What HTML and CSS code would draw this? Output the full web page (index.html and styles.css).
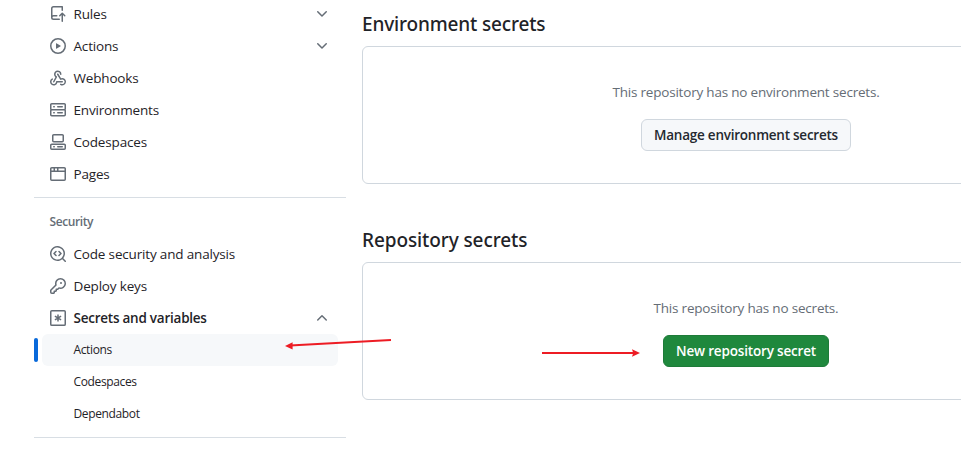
FILE: index.html
```html
<!DOCTYPE html>
<html lang="en">
<head>
<meta charset="utf-8">
<title>Actions secrets</title>
<link rel="stylesheet" href="styles.css">
</head>
<body>
<div class="page">
  <nav class="sidebar">
    <ul class="nav-list">
      <li class="nav-item"><svg class="icon" viewBox="0 0 16 16"><path d="M1 2.5A2.5 2.5 0 0 1 3.5 0h8.75a.75.75 0 0 1 .75.75v3.5a.75.75 0 0 1-1.5 0V1.5h-8a1 1 0 0 0-1 1v6.708A2.493 2.493 0 0 1 3.5 9h3.25a.75.75 0 0 1 0 1.5H3.5a1 1 0 0 0 0 2h5.75a.75.75 0 0 1 0 1.5H3.5A2.5 2.5 0 0 1 1 11.5Zm13.23 7.79h-.001l-1.224-1.224v6.184a.75.75 0 0 1-1.5 0V9.066L10.28 10.29a.75.75 0 0 1-1.06-1.061l2.505-2.504a.75.75 0 0 1 1.06 0L15.29 9.23a.751.751 0 0 1-.018 1.042.751.751 0 0 1-1.042.018Z"/></svg><span class="label">Rules</span><svg class="icon chevron" viewBox="0 0 16 16"><path d="M12.78 5.22a.749.749 0 0 1 0 1.06l-4.25 4.25a.749.749 0 0 1-1.06 0L3.22 6.28a.749.749 0 1 1 1.06-1.06L8 8.939l3.72-3.719a.749.749 0 0 1 1.06 0Z"/></svg></li>
      <li class="nav-item"><svg class="icon" viewBox="0 0 16 16"><path d="M8 0a8 8 0 1 1 0 16A8 8 0 0 1 8 0ZM1.5 8a6.5 6.5 0 1 0 13 0 6.5 6.5 0 0 0-13 0Zm4.879-2.773 4.264 2.559a.25.25 0 0 1 0 .428l-4.264 2.559A.25.25 0 0 1 6 10.559V5.442a.25.25 0 0 1 .379-.215Z"/></svg><span class="label">Actions</span><svg class="icon chevron" viewBox="0 0 16 16"><path d="M12.78 5.22a.749.749 0 0 1 0 1.06l-4.25 4.25a.749.749 0 0 1-1.06 0L3.22 6.28a.749.749 0 1 1 1.06-1.06L8 8.939l3.72-3.719a.749.749 0 0 1 1.06 0Z"/></svg></li>
      <li class="nav-item"><svg class="icon" viewBox="0 0 16 16"><path d="M5.5 4.25a2.25 2.25 0 0 1 4.5 0 .75.75 0 0 0 1.5 0 3.75 3.75 0 1 0-6.14 2.889l-2.272 4.258a.75.75 0 0 0 1.324.706L7 7.25a.75.75 0 0 0-.309-1.015A2.25 2.25 0 0 1 5.5 4.25Z"/><path d="M7.364 3.607a.75.75 0 0 1 1.03.257l2.608 4.349a3.75 3.75 0 1 1-.628 6.785.75.75 0 0 1 .752-1.299 2.25 2.25 0 1 0-.033-3.88.75.75 0 0 1-1.03-.256L7.107 4.636a.75.75 0 0 1 .257-1.03Z"/><path d="M2.9 8.776A.75.75 0 0 1 2.625 9.8 2.25 2.25 0 1 0 6 11.75a.75.75 0 0 1 .75-.751h5.5a.75.75 0 0 1 0 1.5H7.425a3.751 3.751 0 1 1-5.55-3.998.75.75 0 0 1 1.024.274Z"/></svg><span class="label">Webhooks</span></li>
      <li class="nav-item"><svg class="icon" viewBox="0 0 16 16"><path d="M1.75 1h12.5c.966 0 1.75.784 1.75 1.75v4c0 .372-.116.717-.314 1 .198.283.314.628.314 1v4a1.75 1.75 0 0 1-1.75 1.75H1.75A1.75 1.75 0 0 1 0 12.75v-4c0-.358.109-.707.314-1a1.739 1.739 0 0 1-.314-1v-4C0 1.784.784 1 1.75 1ZM1.5 2.75v4c0 .138.112.25.25.25h12.5a.25.25 0 0 0 .25-.25v-4a.25.25 0 0 0-.25-.25H1.75a.25.25 0 0 0-.25.25Zm.25 5.75a.25.25 0 0 0-.25.25v4c0 .138.112.25.25.25h12.5a.25.25 0 0 0 .25-.25v-4a.25.25 0 0 0-.25-.25ZM7 4.75A.75.75 0 0 1 7.75 4h4.5a.75.75 0 0 1 0 1.5h-4.5A.75.75 0 0 1 7 4.75ZM7.75 10h4.5a.75.75 0 0 1 0 1.5h-4.5a.75.75 0 0 1 0-1.5ZM3 4.75A.75.75 0 0 1 3.75 4h.5a.75.75 0 0 1 0 1.5h-.5A.75.75 0 0 1 3 4.75ZM3.75 10h.5a.75.75 0 0 1 0 1.5h-.5a.75.75 0 0 1 0-1.5Z"/></svg><span class="label">Environments</span></li>
      <li class="nav-item"><svg class="icon" viewBox="0 0 16 16"><path d="M0 11.25c0-.966.784-1.75 1.75-1.75h12.5c.966 0 1.75.784 1.75 1.75v3A1.75 1.75 0 0 1 14.25 16H1.75A1.75 1.75 0 0 1 0 14.25Zm2-9.5C2 .784 2.784 0 3.75 0h8.5C13.216 0 14 .784 14 1.75v5a1.75 1.75 0 0 1-1.75 1.75h-8.5A1.75 1.75 0 0 1 2 6.75Zm1.75-.25a.25.25 0 0 0-.25.25v5c0 .138.112.25.25.25h8.5a.25.25 0 0 0 .25-.25v-5a.25.25 0 0 0-.25-.25Zm-2 9.5a.25.25 0 0 0-.25.25v3c0 .138.112.25.25.25h12.5a.25.25 0 0 0 .25-.25v-3a.25.25 0 0 0-.25-.25Z"/><path d="M7 12.75a.75.75 0 0 1 .75-.75h4.5a.75.75 0 0 1 0 1.5h-4.5a.75.75 0 0 1-.75-.75Zm-4 0a.75.75 0 0 1 .75-.75h.5a.75.75 0 0 1 0 1.5h-.5a.75.75 0 0 1-.75-.75Z"/></svg><span class="label">Codespaces</span></li>
      <li class="nav-item"><svg class="icon" viewBox="0 0 16 16"><path d="M0 2.75C0 1.784.784 1 1.75 1h12.5c.966 0 1.75.784 1.75 1.75v10.5A1.75 1.75 0 0 1 14.25 15H1.75A1.75 1.75 0 0 1 0 13.25ZM14.5 6h-13v7.25c0 .138.112.25.25.25h12.5a.25.25 0 0 0 .25-.25Zm-6-3.5v2h6V2.75a.25.25 0 0 0-.25-.25ZM5 2.5v2h2v-2Zm-3.25 0a.25.25 0 0 0-.25.25V4.5h2v-2Z"/></svg><span class="label">Pages</span></li>
    </ul>
    <h3 class="group-title">Security</h3>
    <ul class="nav-list">
      <li class="nav-item"><svg class="icon" viewBox="0 0 16 16"><path d="M8.47 4.97a.75.75 0 0 0 0 1.06L9.94 7.5 8.47 8.97a.75.75 0 1 0 1.06 1.06l2-2a.75.75 0 0 0 0-1.06l-2-2a.75.75 0 0 0-1.06 0ZM6.53 6.03a.75.75 0 0 0-1.06-1.06l-2 2a.75.75 0 0 0 0 1.06l2 2a.75.75 0 1 0 1.06-1.06L5.06 7.5l1.47-1.47Z"/><path d="M12.246 13.307a7.501 7.501 0 1 1 1.06-1.06l2.474 2.473a.749.749 0 1 1-1.06 1.06ZM1.5 7.5a6.002 6.002 0 0 0 3.608 5.504 6.002 6.002 0 0 0 6.486-1.117.748.748 0 0 1 .292-.293A6 6 0 1 0 1.5 7.5Z"/></svg><span class="label">Code security and analysis</span></li>
      <li class="nav-item"><svg class="icon" viewBox="0 0 16 16"><path d="M10.5 0a5.499 5.499 0 1 1-1.288 10.848l-.932.932a.749.749 0 0 1-.53.22H7v.75a.749.749 0 0 1-.22.53l-.5.5a.749.749 0 0 1-.53.22H5v.75a.749.749 0 0 1-.22.53l-.5.5a.749.749 0 0 1-.53.22h-2A1.75 1.75 0 0 1 0 14.25v-2c0-.199.079-.389.22-.53l4.932-4.932A5.5 5.5 0 0 1 10.5 0Zm-4 5.5c-.001.431.069.86.205 1.269a.75.75 0 0 1-.181.768L1.5 12.56v1.69c0 .138.112.25.25.25h1.69l.06-.06v-1.19a.75.75 0 0 1 .75-.75h1.19l.06-.06v-1.19a.75.75 0 0 1 .75-.75h1.19l1.023-1.025a.75.75 0 0 1 .768-.18A4 4 0 1 0 6.5 5.5ZM11 6a1 1 0 1 1 0-2 1 1 0 0 1 0 2Z"/></svg><span class="label">Deploy keys</span></li>
      <li class="nav-item"><svg class="icon line" viewBox="0 0 16 16"><rect x=".75" y=".75" width="14.5" height="14.5" rx="1.1"/><path d="M8 4.4v7.2M4.9 6.2l6.2 3.6M11.1 6.2 4.9 9.8"/></svg><span class="label strong">Secrets and variables</span><svg class="icon chevron" viewBox="0 0 16 16"><path d="M3.22 10.53a.749.749 0 0 1 0-1.06l4.25-4.25a.749.749 0 0 1 1.06 0l4.25 4.25a.749.749 0 1 1-1.06 1.06L8 6.811 4.28 10.53a.749.749 0 0 1-1.06 0Z"/></svg></li>
      <li class="sub-item current">Actions</li>
      <li class="sub-item">Codespaces</li>
      <li class="sub-item">Dependabot</li>
    </ul>
  </nav>
  <main class="content">
    <section class="secrets">
      <h2 class="title">Environment secrets</h2>
      <div class="box">
        <p class="note">This repository has no environment secrets.</p>
        <button class="btn btn-manage">Manage environment secrets</button>
      </div>
    </section>
    <section class="secrets">
      <h2 class="title title-repo">Repository secrets</h2>
      <div class="box">
        <p class="note">This repository has no secrets.</p>
        <button class="btn btn-new">New repository secret</button>
      </div>
    </section>
  </main>
  <svg class="arrows" viewBox="0 0 961 457"><path class="shaft" d="M391 340 290 345.6M542 353H635"/><path class="head" d="M285 346l7.6-3.8v7.2ZM640 353l-8-3.8 1.2 3.8-1.2 3.8Z"/></svg>
</div>
</body>
</html>
```
FILE: styles.css
```css
* { box-sizing: border-box; }
body {
  margin: 0;
  background: #fff;
  color: #1f2328;
  font: 14px/20px "Open Sans", "Noto Sans", sans-serif;
  overflow: hidden;
}
.page {
  position: relative;
  display: flex;
  gap: 16px;
  height: 457px;
  padding-left: 34px;
  overflow: hidden;
}
.sidebar { flex: 0 0 312px; margin-top: -2px; }
.nav-list {
  margin: 0;
  padding: 0 0 7px;
  list-style: none;
  border-bottom: 1px solid #d8dee4;
}
.nav-item {
  display: flex;
  align-items: center;
  gap: 7.5px;
  height: 32px;
  padding: 0 16px;
}
.icon { flex: none; width: 16px; height: 16px; fill: #656d76; }
.line { fill: none; stroke: #656d76; stroke-width: 1.5; }
.chevron { margin-left: auto; }
.label { font-size: 13.5px; letter-spacing: -0.17px; white-space: nowrap; }
.strong { font-weight: 600; letter-spacing: -0.24px; }
.group-title {
  margin: 0;
  padding: 15px 15.5px 7px;
  font: 600 12px/18px "Open Sans", sans-serif;
  letter-spacing: -0.4px;
  color: #656d76;
}
.sub-item {
  position: relative;
  height: 32px;
  margin: 0 8px;
  padding-left: 31.5px;
  border-radius: 6px;
  font-size: 12px;
  letter-spacing: -0.36px;
  line-height: 32px;
}
.current { background: #f6f8fa; }
.current::before {
  content: "";
  position: absolute;
  left: -8px;
  top: 4px;
  width: 4px;
  height: 24px;
  border-radius: 6px;
  background: #0969da;
}
.content { flex: 0 0 768px; padding-top: 9px; }
.secrets { margin-bottom: 41px; }
.title {
  margin: 0 0 7px;
  font: 500 19px/30px "Noto Sans", sans-serif;
  letter-spacing: -0.16px;
}
.title-repo { letter-spacing: -0.1px; }
.box {
  display: flex;
  flex-direction: column;
  align-items: center;
  height: 138px;
  padding-top: 35px;
  border: 1px solid #d0d7de;
  border-radius: 6px;
}
.note { margin: 0 0 17px; font-size: 13.5px; letter-spacing: -0.2px; color: #656d76; white-space: nowrap; }
.btn {
  height: 32px;
  padding: 0;
  border: 1px solid #d0d7de;
  border-radius: 6px;
  background: #f6f8fa;
  color: #24292f;
  font: 600 13.5px/20px "Open Sans", sans-serif;
  letter-spacing: -0.24px;
  white-space: nowrap;
}
.btn-manage { width: 210px; }
.btn-new { width: 166px; background: #1f883d; border-color: #1e7b39; color: #fff; letter-spacing: -0.17px; }
.arrows { position: absolute; left: 0; top: 0; width: 961px; height: 457px; }
.shaft { fill: none; stroke: #ed1c24; stroke-width: 2; }
.head { fill: #ed1c24; }
```
